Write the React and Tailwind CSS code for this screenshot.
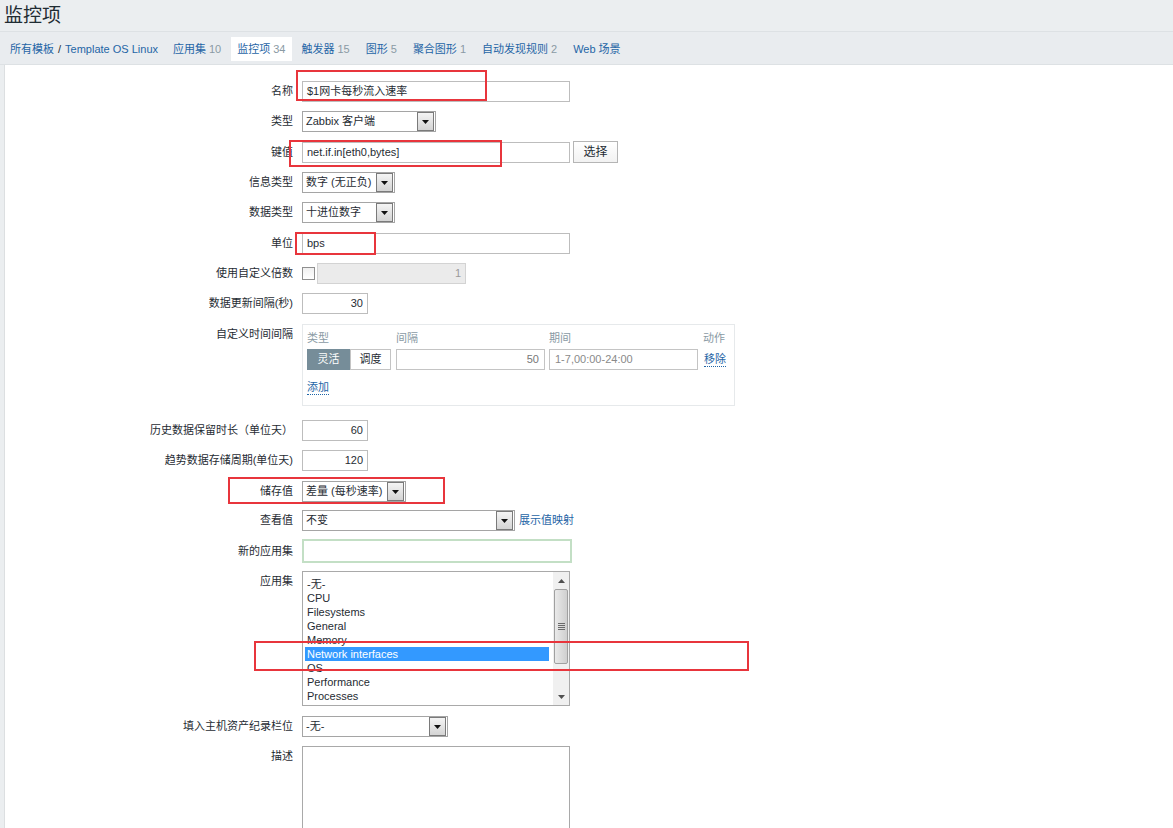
import React from "react";

function Arrow() {
  return (
    <div className="ml-auto mr-[1px] flex h-[19px] w-[17px] shrink-0 items-center justify-center border border-[#7a7a7a] bg-gradient-to-b from-[#f4f4f4] to-[#d4d4d4]">
      <svg width="7" height="4" viewBox="0 0 7 4"><path d="M0 0h7L3.5 4z" fill="#111" /></svg>
    </div>
  );
}

function Select({ cls, text }) {
  return (
    <div className={"flex h-[21px] items-center border border-[#a5a5a5] bg-white pl-[3px] text-[11px] text-[#1f2c33] " + cls}>
      <span className="whitespace-nowrap">{text}</span>
      <Arrow />
    </div>
  );
}

function Input({ cls, text, right }) {
  return (
    <div className={"flex h-[21px] items-center border border-[#bdbdbd] bg-white px-[4px] text-[11px] text-[#1f2c33] " + (right ? "justify-end " : "") + cls}>
      {text}
    </div>
  );
}

function Row({ label, mt, children, top }) {
  return (
    <div className={"flex " + (top ? "items-start " : "items-center ") + mt}>
      <div className={"w-[288px] shrink-0 text-right text-[11px] text-[#1f2c33] " + (top ? "leading-[21px]" : "")}>{label}</div>
      <div className="ml-[9px] flex items-center">{children}</div>
    </div>
  );
}

function Tab({ name, count, active }) {
  return (
    <div className={"flex h-[24px] items-center px-[6px] " + (active ? "bg-white" : "")}>
      <span className="text-[#1f65a6]">{name}</span>
      {count !== undefined && <span className="ml-[3px] text-[#8a9aa4]">{count}</span>}
    </div>
  );
}

export default function App() {
  const apps = ["-无-", "CPU", "Filesystems", "General", "Memory", "Network interfaces", "OS", "Performance", "Processes"];
  return (
    <div className="relative h-[828px] w-[1173px] overflow-hidden bg-[#ebeef0] font-['Liberation_Sans','Noto_Sans_CJK_SC',Arial,sans-serif] text-[11px] text-[#1f2c33]">
      {/* title */}
      <div className="flex h-[31px] items-center pl-[4px] text-[19px] leading-[24px] text-[#1f2c33]">监控项</div>
      {/* nav */}
      <div className="flex h-[34px] items-center border-y border-[#dde1e4] bg-[#e9ecef] pl-[10px] pt-[2px]">
        <span className="text-[#1f65a6]">所有模板</span>
        <span className="mx-[4px] text-[#1f2c33]">/</span>
        <span className="text-[#1f65a6]">Template OS Linux</span>
        <div className="ml-[9px] flex items-center gap-[4px]">
          <Tab name="应用集" count="10" />
          <Tab name="监控项" count="34" active />
          <Tab name="触发器" count="15" />
          <Tab name="图形" count="5" />
          <Tab name="聚合图形" count="1" />
          <Tab name="自动发现规则" count="2" />
          <Tab name="Web 场景" />
        </div>
      </div>
      {/* panel */}
      <div className="ml-[4px] h-full border-l border-[#dcdfe1] bg-white pt-[16px]">
        <Row label="名称" mt="">
          <Input cls="w-[268px]" text="$1网卡每秒流入速率" />
        </Row>
        <Row label="类型" mt="mt-[9px]">
          <Select cls="w-[134px]" text="Zabbix 客户端" />
        </Row>
        <Row label="键值" mt="mt-[9px]">
          <Input cls="w-[268px]" text="net.if.in[eth0,bytes]" />
          <div className="ml-[3px] flex h-[22px] w-[45px] items-center justify-center border border-[#b5b5b5] bg-gradient-to-b from-white to-[#f2f2f2] text-[12px]">选择</div>
        </Row>
        <Row label="信息类型" mt="mt-[9px]">
          <Select cls="w-[93px]" text="数字 (无正负)" />
        </Row>
        <Row label="数据类型" mt="mt-[9px]">
          <Select cls="w-[93px]" text="十进位数字" />
        </Row>
        <Row label="单位" mt="mt-[10px]">
          <Input cls="w-[268px]" text="bps" />
        </Row>
        <Row label="使用自定义倍数" mt="mt-[9px]">
          <div className="h-[13px] w-[13px] border border-[#8f8f8f] bg-gradient-to-b from-[#f0f0f0] to-white" />
          <div className="ml-[2px] flex h-[21px] w-[149px] items-center justify-end border border-[#d3d3d3] bg-[#ebebeb] px-[4px] text-[#9a9a9a]">1</div>
        </Row>
        <Row label="数据更新间隔(秒)" mt="mt-[9px]">
          <Input cls="w-[66px]" text="30" right />
        </Row>
        <Row label="自定义时间间隔" mt="mt-[10px]" top>
          <div className="h-[82px] w-[433px] border border-[#e6e9eb] px-[4px] pt-[4px]">
            <div className="flex h-[18px] items-center text-[#8a9aa4]">
              <span className="w-[89px]">类型</span>
              <span className="w-[153px]">间隔</span>
              <span className="w-[154px]">期间</span>
              <span>动作</span>
            </div>
            <div className="mt-[2px] flex items-center">
              <div className="flex h-[21px] w-[43px] items-center justify-center bg-[#768d99] text-white">灵活</div>
              <div className="flex h-[21px] w-[41px] items-center justify-center border border-[#c4c4c4] bg-white">调度</div>
              <div className="ml-[5px] flex h-[21px] w-[149px] items-center justify-end border border-[#c4c4c4] px-[5px] text-[#777]">50</div>
              <div className="ml-[4px] flex h-[21px] w-[149px] items-center border border-[#c4c4c4] px-[5px] text-[#8a8a8a]">1-7,00:00-24:00</div>
              <span className="ml-[6px] border-b border-dotted border-[#1f65a6] leading-[14px] text-[#1f65a6]">移除</span>
            </div>
            <div className="mt-[10px] flex">
              <span className="border-b border-dotted border-[#1f65a6] leading-[14px] text-[#1f65a6]">添加</span>
            </div>
          </div>
        </Row>
        <Row label="历史数据保留时长（单位天）" mt="mt-[14px]">
          <Input cls="w-[66px]" text="60" right />
        </Row>
        <Row label="趋势数据存储周期(单位天)" mt="mt-[9px]">
          <Input cls="w-[66px]" text="120" right />
        </Row>
        <Row label="储存值" mt="mt-[10px]">
          <Select cls="w-[104px]" text="差量 (每秒速率)" />
        </Row>
        <Row label="查看值" mt="mt-[8px]">
          <Select cls="w-[213px]" text="不变" />
          <span className="ml-[4px] text-[#1f65a6]">展示值映射</span>
        </Row>
        <Row label="新的应用集" mt="mt-[8px]">
          <div className="h-[24px] w-[270px] border-2 border-[#c3dfc5] bg-white" />
        </Row>
        <Row label="应用集" mt="mt-[8px]" top>
          <div className="flex h-[135px] w-[268px] border border-[#a9a9a9] bg-white">
            <div className="flex-1 pl-[2px] pt-[5px]">
              {apps.map((a) => (
                <div
                  key={a}
                  className={"h-[14px] pl-[2px] text-[11px] leading-[14px] " + (a === "Network interfaces" ? "mr-[4px] bg-[#3399ff] text-white" : "text-[#1f2c33]")}
                >
                  {a}
                </div>
              ))}
            </div>
            <div className="flex w-[16px] flex-col bg-[#f0f0f0]">
              <div className="flex h-[17px] items-center justify-center">
                <svg width="7" height="4" viewBox="0 0 7 4"><path d="M0 4h7L3.5 0z" fill="#505050" /></svg>
              </div>
              <div className="mx-[1px] flex h-[75px] items-center justify-center rounded-[2px] border border-[#a0a0a0] bg-gradient-to-r from-[#eaeaea] via-[#dcdcdc] to-[#cfcfcf]">
                <svg width="7" height="7" viewBox="0 0 7 7"><path d="M0 0.5h7M0 2.5h7M0 4.5h7M0 6.5h7" stroke="#6a6a6a" strokeWidth="1" /></svg>
              </div>
              <div className="mt-auto flex h-[17px] items-center justify-center">
                <svg width="7" height="4" viewBox="0 0 7 4"><path d="M0 0h7L3.5 4z" fill="#505050" /></svg>
              </div>
            </div>
          </div>
        </Row>
        <Row label="填入主机资产纪录栏位" mt="mt-[10px]">
          <Select cls="w-[146px]" text="-无-" />
        </Row>
        <Row label="描述" mt="mt-[9px]" top>
          <div className="h-[120px] w-[268px] border border-[#a9a9a9] bg-white" />
        </Row>
      </div>

      {/* annotation boxes */}
      <div className="pointer-events-none absolute left-[296px] top-[70px] h-[31px] w-[191px] border-2 border-[#e8353c]" />
      <div className="pointer-events-none absolute left-[289px] top-[140px] h-[27px] w-[213px] border-2 border-[#e8353c]" />
      <div className="pointer-events-none absolute left-[295px] top-[232px] h-[23px] w-[81px] border-2 border-[#e8353c]" />
      <div className="pointer-events-none absolute left-[228px] top-[477px] h-[27px] w-[217px] border-2 border-[#e8353c]" />
      <div className="pointer-events-none absolute left-[254px] top-[641px] h-[30px] w-[495px] border-2 border-[#e8353c]" />
    </div>
  );
}
